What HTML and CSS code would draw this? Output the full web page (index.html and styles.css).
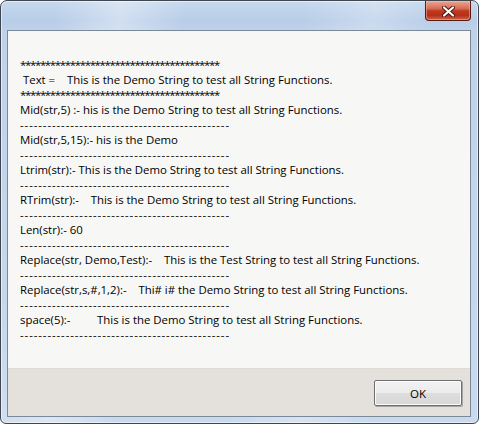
FILE: index.html
```html
<!DOCTYPE html>
<html>
<head>
<meta charset="utf-8">
<link rel="stylesheet" href="styles.css">
</head>
<body>
<div class="window">
  <div class="titlebar">
    <div class="close">
      <svg width="13" height="11" viewBox="0 0 13 11">
        <path d="M2 1.5 L11 9.5 M11 1.5 L2 9.5" stroke="#4a1208" stroke-width="4" stroke-linecap="round"/>
        <path d="M2 1.5 L11 9.5 M11 1.5 L2 9.5" stroke="#ffffff" stroke-width="2.2" stroke-linecap="round"/>
      </svg>
    </div>
  </div>
  <div class="client">
    <div class="content">
<div class="line stars">****************************************</div>
<div class="line"> Text =    This is the Demo String to test all String Functions.</div>
<div class="line stars">****************************************</div>
<div class="line">Mid(str,5) :- his is the Demo String to test all String Functions.</div>
<div class="line dash">----------------------------------------------</div>
<div class="line">Mid(str,5,15):- his is the Demo</div>
<div class="line dash">----------------------------------------------</div>
<div class="line">Ltrim(str):- This is the Demo String to test all String Functions.</div>
<div class="line dash">----------------------------------------------</div>
<div class="line">RTrim(str):-    This is the Demo String to test all String Functions.</div>
<div class="line dash">----------------------------------------------</div>
<div class="line">Len(str):- 60</div>
<div class="line dash">----------------------------------------------</div>
<div class="line">Replace(str, Demo,Test):-    This is the Test String to test all String Functions.</div>
<div class="line dash">----------------------------------------------</div>
<div class="line">Replace(str,s,#,1,2):-    Thi# i# the Demo String to test all String Functions.</div>
<div class="line dash">----------------------------------------------</div>
<div class="line">space(5):-         This is the Demo String to test all String Functions.</div>
<div class="line dash">----------------------------------------------</div>
    </div>
    <div class="buttons">
      <button class="ok">OK</button>
    </div>
  </div>
</div>
</body>
</html>
```
FILE: styles.css
```css
html, body {
  margin: 0;
  padding: 0;
  background: #ffffff;
}
body {
  width: 479px;
  height: 424px;
  overflow: hidden;
  font-family: "Open Sans", "Noto Sans", sans-serif;
  font-size: 11.4px;
  color: #000;
}
.window {
  box-sizing: border-box;
  width: 479px;
  height: 424px;
  border: 1px solid #3f4650;
  border-radius: 7px 7px 6px 6px;
  background:
    linear-gradient(100deg, rgba(255,255,255,0) 10%, rgba(255,255,255,0.35) 22%, rgba(255,255,255,0) 34%, rgba(255,255,255,0) 55%, rgba(255,255,255,0.25) 68%, rgba(255,255,255,0) 80%),
    linear-gradient(to bottom, #c6d8ee 0px, #b8cde8 20px, #bfd2ea 30px, #c9daee 100%);
  box-shadow: inset 0 0 0 1px rgba(255,255,255,0.55);
  display: flex;
  flex-direction: column;
  padding: 0 7px 6px 6px;
}
.titlebar {
  height: 29px;
  display: flex;
  justify-content: flex-end;
  align-items: flex-start;
}
.close {
  width: 44px;
  height: 19px;
  border: 1px solid #5a1a10;
  border-top: none;
  border-radius: 0 0 4px 4px;
  background: linear-gradient(to bottom, #e8a896 0%, #d86b54 40%, #c0391f 52%, #b33019 75%, #d0624a 100%);
  box-shadow: inset 0 0 0 1px rgba(255,200,180,0.45);
  display: flex;
  align-items: center;
  justify-content: center;
}
.close svg {
  display: block;
  margin-top: 1px;
}
.client {
  flex: 1;
  border: 1px solid #7b8898;
  display: flex;
  flex-direction: column;
}
.content {
  flex: 1;
  background: #f7f7f5;
  padding: 26px 0 0 12px;
}
.line {
  white-space: pre;
  height: 15px;
  line-height: 15px;
}
.stars {
  letter-spacing: -1.3px;
}
.dash {
  letter-spacing: 0.9px;
}
.buttons {
  height: 48px;
  background: #e4e1dd;
  border-top: 1px solid #dedbd7;
  display: flex;
  justify-content: flex-end;
  align-items: flex-start;
  padding: 11px 8px 0 0;
  box-sizing: border-box;
}
.ok {
  width: 88px;
  height: 26px;
  font-family: "Open Sans", "Noto Sans", sans-serif;
  font-size: 11.5px;
  color: #000;
  border: 1px solid #6f6f6f;
  border-radius: 2px;
  background: linear-gradient(to bottom, #f2f2f2 0%, #ebebeb 50%, #dddddd 51%, #d8d8d8 100%);
  box-shadow: inset 0 0 0 1px #fbfbfb, 1px 1px 0 #a8a6a3;
  padding: 0;
}
```
